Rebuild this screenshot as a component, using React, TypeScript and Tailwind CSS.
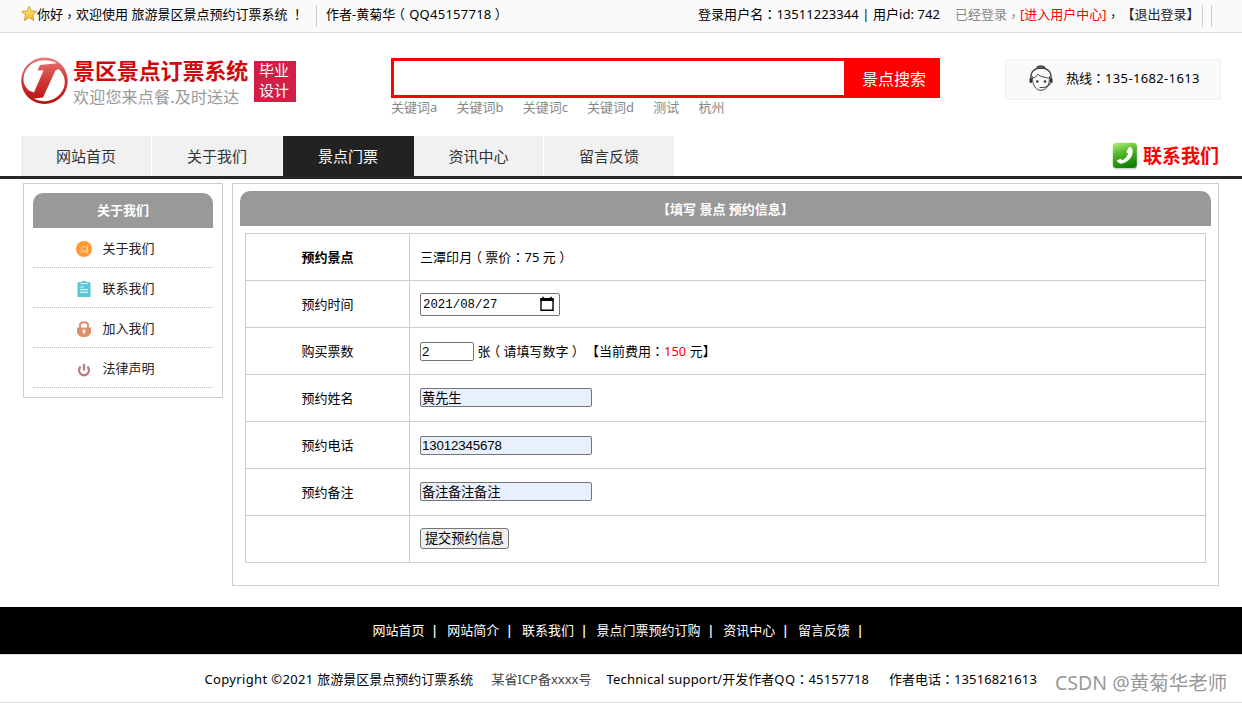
import { Fragment, type ReactNode } from "react";

const punctuation: Record<string, string> = {
  "（": "px-[3.250px] [font-feature-settings:'halt']",
  "）": "px-[3.250px] [font-feature-settings:'halt']",
  "，": "inline-block translate-y-[2px]",
};

/* Full-width punctuation is set in the TC face so that it sits centred in its cell. */
function T({ children }: { children: string }) {
  return (
    <>
      {children.split(/([，：！（）])/).map((part, i) =>
        i % 2 ? (
          <span key={i} className={`font-['Noto_Sans_CJK_TC',sans-serif] ${punctuation[part] ?? ""}`}>{part}</span>
        ) : (
          <Fragment key={i}>{part}</Fragment>
        ),
      )}
    </>
  );
}

function StarIcon() {
  return (
    <svg width="17" height="17" viewBox="0 0 17 17" className="shrink-0">
      <defs>
        <linearGradient id="star" x1="0" y1="0" x2="0" y2="1">
          <stop offset="0" stopColor="#ffe98a" />
          <stop offset="1" stopColor="#f5b921" />
        </linearGradient>
      </defs>
      <path d="M8.3 1l2 4.9 5.6.5-4.2 3.6 1.3 5.6-4.9-3-4.8 3 1.2-5.6L.7 6.4l5.500-.5z" fill="url(#star)" stroke="#c9983a" strokeWidth="0.9" strokeLinejoin="round" />
    </svg>
  );
}

function Logo() {
  return (
    <svg width="48" height="48" viewBox="0 0 48 48" className="shrink-0">
      <defs>
        <linearGradient id="ring" x1="0" y1="0" x2="0" y2="1">
          <stop offset="0" stopColor="#e87a78" />
          <stop offset="0.5" stopColor="#cf3836" />
          <stop offset="1" stopColor="#b5100f" />
        </linearGradient>
      </defs>
      <path fillRule="evenodd" fill="url(#ring)" d="M23.5.5a23.3 23.3 0 1 1 0 46.600 23.3 23.3 0 0 1 0-46.600zM24 3.200C12 2.800 3 11 2.500 21.500 2.200 27 5 30.500 8 33.500L13 35.500 22.500 13.500 16.500 13.300 19 8 36 6.300C32.500 4 28.500 3.200 24 3.200zM37.500 12L34.500 13.500 22 40.500 13 41.500C17 44 22 44.800 26.500 44 37 42 44 34 43.800 24.500 43.600 19.500 41.500 15.500 37.500 12z" />
    </svg>
  );
}

function AgentIcon() {
  return (
    <svg width="24" height="28" viewBox="0 0 24 28" fill="none" stroke="#444" className="-mt-[3px] shrink-0">
      <path d="M8 4.200C8.500 1.200 15 1.200 16 4.200M8 4.200h8" strokeWidth="1.400" />
      <path d="M2 14C1.500 7.500 6 4 12 4s10.500 3.500 10 10" strokeWidth="1.400" />
      <path d="M3.200 12C3.500 22 7 26.300 12 26.300S20.500 22 20.800 12" strokeWidth="1" />
      <path d="M3.500 14.500C6 13.500 8 12 8.700 10.300 12 13.500 17 13 20.500 14.500" strokeWidth="1" />
      <rect x="0.500" y="14" width="2.500" height="5" rx="1" fill="#333" stroke="none" />
      <rect x="21" y="14" width="2.500" height="5" rx="1" fill="#333" stroke="none" />
      <circle cx="8.300" cy="17.500" r="1.300" fill="#333" stroke="none" />
      <circle cx="16" cy="17.500" r="1.300" fill="#333" stroke="none" />
      <path d="M21.500 19C20 22 17 23.500 13 23.500h-2.500" strokeWidth="1.100" />
    </svg>
  );
}

function PhoneIcon() {
  return (
    <svg width="26" height="28" viewBox="0 0 26 28" className="shrink-0">
      <defs>
        <linearGradient id="green" x1="0" y1="0" x2="0.300" y2="1">
          <stop offset="0" stopColor="#b9ec83" />
          <stop offset="0.450" stopColor="#53ba2b" />
          <stop offset="1" stopColor="#138704" />
        </linearGradient>
      </defs>
      <rect x="1" y="2" width="24.500" height="25.500" rx="4" fill="#bbb" opacity="0.600" />
      <rect x="0.800" y="0.800" width="24" height="25.200" rx="3.500" fill="url(#green)" />
      <path d="M18.800 5.200l1.800 2.300c1.300 7-5 13.700-12.300 14.200L5.200 19.600c-.5-.6-.2-1.200.4-1.600l2.400-1.100c.8-.3 1.300 0 1.600.6l.4.700c2.800-1.200 5.300-4 6.200-6.800l-1.300-.6c-.7-.5-.6-1.200-.2-1.800l2-3.300c.5-.8 1.400-1.200 2.100-.5z" fill="#fff" />
    </svg>
  );
}

const sideIcons: ReactNode[] = [
  <svg key="a" width="16" height="16" viewBox="0 0 16 16">
    <circle cx="8" cy="8" r="8" fill="#ff9a33" />
    <path d="M4 8.300L8 5l3 2.500M11.500 4v8M5.300 8v3.500h1.400V9.300h2.200v2.200h1.500V8" fill="none" stroke="#ffcb94" strokeWidth="1" />
  </svg>,
  <svg key="b" width="16" height="16" viewBox="0 0 16 16">
    <path d="M1.500 1.300h3L7 0h2l2.500 1.300h3V16h-13z" fill="#58c5d8" />
    <path d="M4.500 2.600h7M4 6h4M4 8.700h8M4 11.400h8" stroke="#d9f3f7" strokeWidth="1.200" />
  </svg>,
  <svg key="c" width="16" height="16" viewBox="0 0 16 16">
    <path d="M4 8V4.200C4 .2 12 .2 12 4.200V8" fill="none" stroke="#dd9168" strokeWidth="2" />
    <path d="M1 6.500h14v4C15 14 12 16 8 16s-7-2-7-5.500z" fill="#dd9168" />
    <circle cx="8" cy="10" r="1.500" fill="#fff" />
    <path d="M8 10v3" stroke="#fff" strokeWidth="1.300" />
  </svg>,
  <svg key="d" width="16" height="16" viewBox="0 0 16 16" fill="none" stroke="#b77f80" strokeWidth="2.300">
    <path d="M4.600 5.600a5 5 0 1 0 6.800 0M8 3v6.500" />
  </svg>,
];

const sideItems = ["关于我们", "联系我们", "加入我们", "法律声明"];
const tabs = ["网站首页", "关于我们", "景点门票", "资讯中心", "留言反馈"];
const keywords = ["关键词a", "关键词b", "关键词c", "关键词d", "测试", "杭州"];
const footLinks = ["网站首页", "网站简介", "联系我们", "景点门票预约订购", "资讯中心", "留言反馈"];

function Row({ label, bold, children }: { label: string; bold?: boolean; children: ReactNode }) {
  return (
    <div className="flex h-[47px] border-b border-[#ccc] pb-px">
      <div className={`-mb-px flex w-[164px] items-center justify-center border-r border-[#ccc] pb-px ${bold ? "font-bold" : ""}`}>{label}</div>
      <div className="flex flex-1 items-center pl-[10px]">{children}</div>
    </div>
  );
}

const field = "h-[19px] rounded-[2px] border border-[#767676] px-[1px] text-[13.33px] leading-[17px] font-['Liberation_Sans','Noto_Sans_CJK_SC',sans-serif] outline-none";

export default function App() {
  return (
    <div className="h-[703px] w-[1242px] overflow-hidden whitespace-nowrap bg-white font-['Noto_Sans','Noto_Sans_CJK_SC',sans-serif] text-[13px] leading-[20px] text-black [text-spacing-trim:space-all]">
      <div className="flex h-[33px] border-b border-[#ddd] bg-[#fafafa] pl-[21px] pt-[5px] leading-[18px]">
        <StarIcon />
        <div className="-ml-px w-[279px]"><T>你好，欢迎使用 旅游景区景点预约订票系统 ！</T></div>
        <div className="h-[22px] w-[10px] border-l border-[#ccc]" />
        <div className="w-[372px]"><T>作者-黄菊华（</T><span className="ml-px tracking-[0.250px]">QQ45157718</span><T>）</T></div>
        <div className="w-[257px] tracking-[0.060px]"><T>登录用户名：13511223344 | 用户id: 742</T></div>
        <div className="w-[247px] text-[#888]">
          <T>已经登录，</T><span className="text-[red]">[进入用户中心]</span>
          <span className="text-[#222]"><T>，</T><span className="ml-[2px]">【退出登录】</span></span>
        </div>
        <div className="h-[22px] w-[10px] shrink-0 border-x border-[#ccc]" />
      </div>

      <div className="flex h-[103px] pl-[21px]">
        <div className="flex w-[370px] pt-[24px]">
          <Logo />
          <div className="ml-[4px] w-[181px]">
            <div className="-mt-px mb-[2px] text-[22px] font-bold leading-[28px] tracking-[-0.100px] text-[#cc0a10]">景区景点订票系统</div>
            <div className="text-[16px] leading-[22px] tracking-[0.2px] text-[#999]">欢迎您来点餐.及时送达</div>
          </div>
          <div className="mt-[4px] h-[41px] w-[42px] bg-[#d11f47] pr-[2px] text-center text-[15px] leading-[20px] text-white"><div className="-mt-px">毕业<br />设计</div></div>
        </div>
        <div className="w-[614px] pt-[25px]">
          <div className="flex h-[40px] w-[549px] border-[3px] border-[red]">
            <input className="w-[450px] outline-none" />
            <button className="flex-1 bg-[red] pl-[7px] pt-[2px] text-[16px] text-white">景点搜索</button>
          </div>
          <div className="-mt-px flex gap-[19.200px] text-[#888]">
            {keywords.map((k) => <span key={k}>{k}</span>)}
          </div>
        </div>
        <div className="mt-[26px] flex h-[41px] w-[216px] items-center border border-[#f0f0f0] bg-[#fafafa] pl-[23px]">
          <AgentIcon />
          <span className="ml-[13px] pb-[4px]"><T>热线：</T><span className="tracking-[0.350px]">135-1682-1613</span></span>
        </div>
      </div>

      <div className="flex h-[43px] border-b-[3px] border-[#272727] pl-[21px]">
        {tabs.map((t, i) => (
          <div key={t} className={`h-[40px] border-r border-white text-center text-[15px] leading-[40px] ${i === 3 ? "-ml-px w-[131px] border-l border-l-[#222]" : "w-[131px]"} ${i === 2 ? "bg-[#222] text-white" : "bg-[#f1f1f1] text-[#333]"}`}>{t}</div>
        ))}
        <div className="ml-auto flex w-[130px] items-center">
          <PhoneIcon />
          <span className="ml-[5px] text-[19px] font-bold text-[red]">联系我们</span>
        </div>
      </div>

      <div className="flex h-[428px] items-start gap-[9px] pl-[23px] pt-[4px]">
        <div className="h-[215px] w-[200px] border border-[#ccc] px-[9px] pt-[9px]">
          <div className="h-[35px] rounded-t-[10px] bg-[#999] text-center font-bold leading-[35px] text-white">关于我们</div>
          {sideItems.map((s, i) => (
            <div key={s} className="flex h-[40px] items-center border-b border-dotted border-[#bbb] pl-[43px] pt-[2px] text-[#222]">
              {sideIcons[i]}
              <span className="ml-[10.500px] pb-px">{s}</span>
            </div>
          ))}
        </div>
        <div className="h-[403px] w-[987px] border border-[#ccc] px-[7px] pt-[7px]">
          <div className="h-[35px] rounded-t-[10px] bg-[#999] text-center font-bold leading-[36px] text-white">【填写 景点 预约信息】</div>
          <div className="ml-[5px] mt-[7px] w-[961px] border-x border-t border-[#ccc]">
            <Row label="预约景点" bold><span className="tracking-[0.050px]"><T>三潭印月（票价：75 元）</T></span></Row>
            <Row label="预约时间">
              <div className="mt-px flex h-[23px] w-[140px] items-center justify-between rounded-[2px] border border-[#767676] pl-[2px] pr-[5px] font-['Liberation_Mono',monospace] text-[12.4px]">
                <span className="pt-[2px]">2021/08/27</span>
                <svg width="14" height="16" viewBox="0 0 14 16" fill="none" stroke="#000"><path d="M1 3v11.200h12V3" strokeWidth="1.400" /><path d="M.3 3.500h13.400" strokeWidth="3" /><path d="M3 .7v2M11 .7v2" strokeWidth="1.500" /></svg>
              </div>
            </Row>
            <Row label="购买票数">
              <input className={`${field} mt-px w-[54px]`} defaultValue="2" />
              <span className="ml-[3.500px]"><T>张（请填写数字）</T> <span className="ml-px">【</span><T>当前费用：</T><span className="text-[red]">150</span> 元】</span>
            </Row>
            <Row label="预约姓名"><input className={`${field} w-[172px] bg-[#e8f0fe] tracking-[-0.200px]`} defaultValue="黄先生" /></Row>
            <Row label="预约电话"><input className={`${field} mt-[2px] w-[172px] bg-[#e8f0fe] tracking-[-0.150px]`} defaultValue="13012345678" /></Row>
            <Row label="预约备注"><input className={`${field} w-[172px] bg-[#e8f0fe] tracking-[-0.300px]`} defaultValue="备注备注备注" /></Row>
            <Row label=""><button className="h-[21px] w-[89px] rounded-[3px] border border-[#767676] bg-[#efefef] text-[13.2px] leading-[19px]">提交预约信息</button></Row>
          </div>
        </div>
      </div>

      <div className="flex h-[47px] bg-black pl-[372.500px] leading-[47px] text-white">
        {footLinks.map((l) => (
          <Fragment key={l}><span>{l}</span><span className="w-[22.700px] pl-[6.500px] font-semibold">|</span></Fragment>
        ))}
      </div>
      <div className="flex h-[49px] border-y border-[#ddd] pl-[204.500px] leading-[48px]">
        <span className="w-[287px]"><span className="tracking-[0.350px]">Copyright ©2021 </span>旅游景区景点预约订票系统</span>
        <span className="w-[115px] text-[#444]">某省ICP备xxxx号</span>
        <span className="w-[282.500px]"><span className="tracking-[0.180px]">Technical support/</span><T>开发作者</T><span className="tracking-[0.4px]">QQ</span><T>：</T><span className="tracking-[0.150px]">45157718</span></span>
        <span className="w-[166px]"><T>作者电话：</T><span className="tracking-[0.1px]">13516821613</span></span>
        <span className="pt-[4px] text-[19.500px] text-[#999]">CSDN @黄菊华老师</span>
      </div>
    </div>
  );
}
